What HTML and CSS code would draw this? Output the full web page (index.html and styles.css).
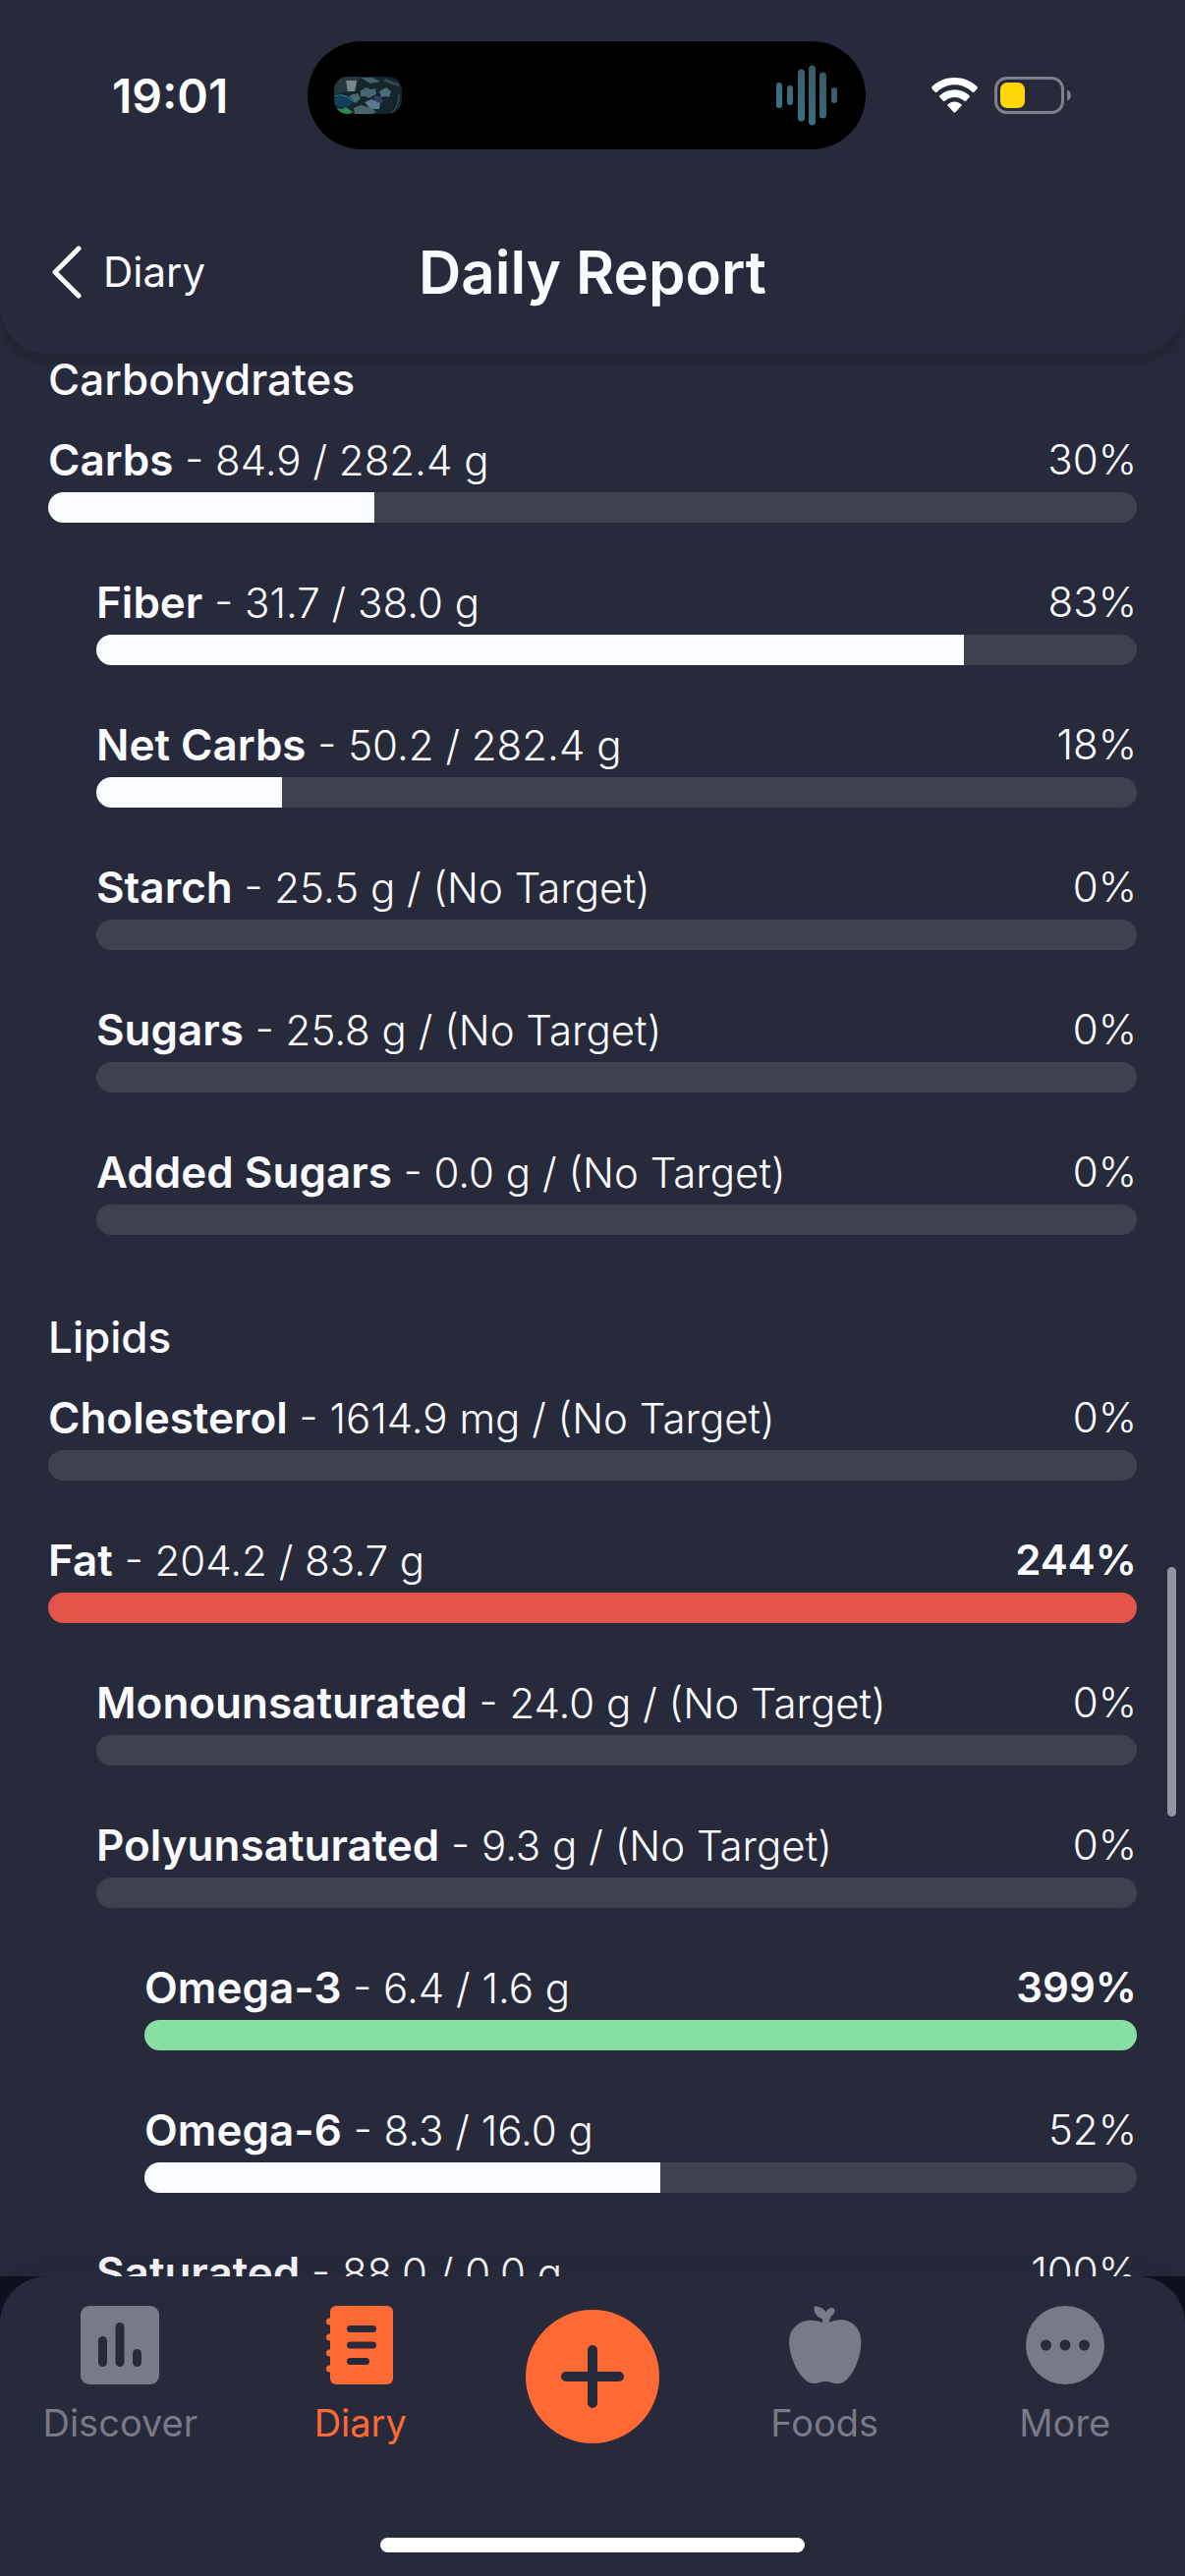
FILE: index.html
```html
<!DOCTYPE html>
<html lang="en">
<head>
  <meta charset="UTF-8" />
  <meta name="viewport" content="width=device-width, initial-scale=1.0" />
  <title>Daily Report</title>
  <link rel="stylesheet" href="styles.css">
</head>
<body>
  <header class="header">
    <!-- Status bar -->
    <div class="status">
      <time class="clock">19:01</time>
      <div class="island">
        <svg class="art" viewBox="0 0 69 38" aria-hidden="true">
          <rect width="69" height="38" fill="#14262b"/>
          <path d="M0 0h26l-4 14L0 18z" fill="#26383c"/>
          <path d="M12 4h11l-2 11h-7z" fill="#77868a"/>
          <path d="M27 1l12 0 8 4-10 2z" fill="#3f626b"/>
          <path d="M52 2l14 5v3L50 5z" fill="#34484d"/>
          <path d="M16 19l8-2 3 5-5 5-6-3z" fill="#4c6971"/>
          <path d="M27 14l6-3 4 2 5-1 1 6-8 4-3-2-5 0z" fill="#466673"/>
          <path d="M46 15l7-4 5 4-2 6-4-1-4 1z" fill="#4b6b78"/>
          <path d="M41 20l6 0 3 5-4 3-6-3z" fill="#30405a"/>
          <path d="M31 26l7-3 4 2 5 2-1 6-9 0z" fill="#587a8f"/>
          <path d="M20 32l7-3 11 3 5 4-4 2H21z" fill="#48656b"/>
          <ellipse cx="9" cy="25" rx="10" ry="6" fill="#133f5c"/>
          <path d="M0 20q9-4 18 4" fill="none" stroke="#2c8494" stroke-width="1"/>
          <path d="M2 32l6 1 4-2 7 5-4 2H5z" fill="#2f8656"/>
          <path d="M66 18q1 12-8 19" fill="none" stroke="#45666c" stroke-width="1"/>
        </svg>
        <svg class="wave" viewBox="0 0 62 62" aria-hidden="true">
          <defs>
            <linearGradient id="waveFill" x1="0" y1="1" x2="1" y2="0">
              <stop offset="0" stop-color="#377b91"/>
              <stop offset="1" stop-color="#3b5358"/>
            </linearGradient>
          </defs>
          <path fill="url(#waveFill)" d="M0 21a3 3 0 0 1 6 0v20a3 3 0 0 1-6 0zM11 24a3 3 0 0 1 6 0v14a3 3 0 0 1-6 0zM22 8a3.500 3.500 0 0 1 7 0v46a3.500 3.500 0 0 1-7 0zM33 4a3.500 3.500 0 0 1 7 0v54a3.500 3.500 0 0 1-7 0zM44 11a3.500 3.500 0 0 1 7 0v40a3.500 3.500 0 0 1-7 0zM56 26a3 3 0 0 1 6 0v10a3 3 0 0 1-6 0z"/>
        </svg>
      </div>
      <div class="signals">
        <svg class="wifi" viewBox="0 0 47 36" role="img" aria-label="Wi-Fi">
          <path fill="#fff" d="M23.500 0C32.500 0 40.500 3.400 46.300 9c.8.800.9 1.600.1 2.400l-2.900 3c-.7.700-1.600.7-2.300 0C36.500 10 30.300 7.300 23.500 7.300S10.500 10 5.800 14.400c-.7.700-1.600.7-2.300 0l-2.900-3C-.2 10.600-.1 9.800.7 9 6.500 3.400 14.500 0 23.500 0z"/>
          <path fill="#fff" d="M23.500 12.300c5.600 0 10.800 2.100 14.800 5.700.8.700.8 1.600.1 2.300l-3.100 3.100c-.7.700-1.500.7-2.300.1-2.600-2.300-5.900-3.600-9.500-3.600s-6.900 1.300-9.500 3.600c-.8.600-1.600.6-2.300-.1l-3.100-3.100c-.7-.7-.7-1.600.1-2.300 4-3.600 9.200-5.700 14.800-5.700z"/>
          <path fill="#fff" d="M23.500 24.500c2.500 0 4.800.9 6.600 2.400.8.600.8 1.500.1 2.200l-5.600 5.900c-.7.700-1.500.7-2.200 0l-5.600-5.900c-.7-.7-.7-1.600.1-2.200 1.800-1.500 4.100-2.400 6.600-2.400z"/>
        </svg>
        <svg class="battery" viewBox="0 0 78 38" role="img" aria-label="Battery">
          <rect x="1.500" y="1.500" width="68" height="35" rx="11" fill="none" stroke="#7d7f89" stroke-width="3"/>
          <path d="M74 13.500q4 1.500 4 5.500t-4 5.500z" fill="#7d7f89"/>
          <rect x="6" y="6" width="25" height="26" rx="7" fill="#ffd60a"/>
        </svg>
      </div>
    </div>

    <!-- Title bar -->
    <div class="title-bar">
      <a href="#diary" class="back">
        <svg class="chevron" viewBox="0 0 31 54" aria-hidden="true">
          <path d="M28 3L4 27l24 24" fill="none" stroke="currentColor" stroke-width="5" stroke-linecap="round" stroke-linejoin="round"/>
        </svg>
        Diary
      </a>
      <h1>Daily Report</h1>
    </div>
  </header>

  <main class="report">
    <section class="group">
      <h2>Carbohydrates</h2>
      <ul class="nutrients">
        <li class="nutrient">
          <p class="line"><span><b>Carbs</b> - 84.9 / 282.4 g</span><span>30%</span></p>
          <div class="track"><div class="fill" style="width: 30%"></div></div>
        </li>
        <li class="nutrient level-2">
          <p class="line"><span><b>Fiber</b> - 31.7 / 38.0 g</span><span>83%</span></p>
          <div class="track"><div class="fill" style="width: 83.4%"></div></div>
        </li>
        <li class="nutrient level-2">
          <p class="line"><span><b>Net Carbs</b> - 50.2 / 282.4 g</span><span>18%</span></p>
          <div class="track"><div class="fill" style="width: 17.8%"></div></div>
        </li>
        <li class="nutrient level-2">
          <p class="line"><span><b>Starch</b> - 25.5 g / (No Target)</span><span>0%</span></p>
          <div class="track"></div>
        </li>
        <li class="nutrient level-2">
          <p class="line"><span><b>Sugars</b> - 25.8 g / (No Target)</span><span>0%</span></p>
          <div class="track"></div>
        </li>
        <li class="nutrient level-2">
          <p class="line"><span><b>Added Sugars</b> - 0.0 g / (No Target)</span><span>0%</span></p>
          <div class="track"></div>
        </li>
      </ul>
    </section>

    <section class="group">
      <h2>Lipids</h2>
      <ul class="nutrients">
        <li class="nutrient">
          <p class="line"><span><b>Cholesterol</b> - 1614.9 mg / (No Target)</span><span>0%</span></p>
          <div class="track"></div>
        </li>
        <li class="nutrient">
          <p class="line"><span><b>Fat</b> - 204.2 / 83.7 g</span><strong>244%</strong></p>
          <div class="track"><div class="fill over" style="width: 100%"></div></div>
        </li>
        <li class="nutrient level-2">
          <p class="line"><span><b>Monounsaturated</b> - 24.0 g / (No Target)</span><span>0%</span></p>
          <div class="track"></div>
        </li>
        <li class="nutrient level-2">
          <p class="line"><span><b>Polyunsaturated</b> - 9.3 g / (No Target)</span><span>0%</span></p>
          <div class="track"></div>
        </li>
        <li class="nutrient level-3">
          <p class="line"><span><b>Omega-3</b> - 6.4 / 1.6 g</span><strong>399%</strong></p>
          <div class="track"><div class="fill met" style="width: 100%"></div></div>
        </li>
        <li class="nutrient level-3">
          <p class="line"><span><b>Omega-6</b> - 8.3 / 16.0 g</span><span>52%</span></p>
          <div class="track"><div class="fill" style="width: 52%"></div></div>
        </li>
        <li class="nutrient level-2">
          <p class="line"><span><b>Saturated</b> - 88.0 / 0.0 g</span><span>100%</span></p>
          <div class="track"><div class="fill" style="width: 100%"></div></div>
        </li>
      </ul>
    </section>
  </main>
  <div class="scroll-thumb"></div>

  <!-- Bottom tabs -->
  <footer class="footer">
    <div class="tab-sheet">
      <nav class="tabs">
        <a href="#discover" class="tab">
          <svg class="tab-icon" viewBox="0 0 80 80" aria-hidden="true">
            <rect width="80" height="80" rx="9" fill="currentColor"/>
            <g class="cut">
              <rect x="18" y="31" width="9" height="31" rx="4.500"/>
              <rect x="35.500" y="17" width="9" height="45" rx="4.500"/>
              <rect x="53" y="44" width="9" height="18" rx="4.500"/>
            </g>
          </svg>
          Discover
        </a>
        <a href="#diary" class="tab active">
          <svg class="tab-icon" viewBox="0 0 80 80" aria-hidden="true">
            <rect x="9" width="64" height="80" rx="6" fill="currentColor"/>
            <g fill="currentColor">
              <circle cx="8.500" cy="16" r="3.500"/>
              <circle cx="8.500" cy="32" r="3.500"/>
              <circle cx="8.500" cy="48" r="3.500"/>
              <circle cx="8.500" cy="64" r="3.500"/>
            </g>
            <g class="cut">
              <rect x="26" y="20" width="30" height="7" rx="3.500"/>
              <rect x="26" y="36.500" width="30" height="7" rx="3.500"/>
              <rect x="26" y="53" width="23" height="7" rx="3.500"/>
            </g>
          </svg>
          Diary
        </a>
        <button type="button" class="add" aria-label="Add">
          <svg class="plus" viewBox="0 0 64 64" aria-hidden="true">
            <path d="M32 5v54M5 32h54" fill="none" stroke="currentColor" stroke-width="10" stroke-linecap="round"/>
          </svg>
        </button>
        <a href="#foods" class="tab">
          <svg class="tab-icon" viewBox="0 0 80 80" aria-hidden="true">
            <path fill="currentColor" d="M38 17v-4C32 12 29 7 29.500 .5c6 0 10 2 12 6 2-4 5-5.500 8-4 2 2 1 4.500-1 6.500-2 2-3.500 4-3.500 8 10-5 21-3 27 4 5 6 6 14 5 22-1.500 12-7 25-14 32-5 5-11 5-16 3-4-1.500-8-1.500-12 0-6 2-11 1-16-4C12 67 6 54 4.500 42c-1-8 0-15 5-20 7-8 18-9 28.500-5z"/>
          </svg>
          Foods
        </a>
        <a href="#more" class="tab">
          <svg class="tab-icon" viewBox="0 0 80 80" aria-hidden="true">
            <circle cx="40" cy="40" r="40" fill="currentColor"/>
            <g class="cut">
              <circle cx="20.500" cy="40" r="5.500"/>
              <circle cx="40" cy="40" r="5.500"/>
              <circle cx="59.500" cy="40" r="5.500"/>
            </g>
          </svg>
          More
        </a>
      </nav>
      <div class="home-indicator"></div>
    </div>
  </footer>
</body>
</html>
```
FILE: styles.css
```css
* {
  margin: 0;
  padding: 0;
  box-sizing: border-box;
}

body {
  display: flex;
  flex-direction: column;
  position: relative;
  height: 100vh;
  overflow: hidden;
  background: #272a3b;
  color: #fafbff;
  font-family: Inter, "Liberation Sans", sans-serif;
  font-size: 42px;
}

a {
  color: inherit;
  text-decoration: none;
}

svg {
  display: block;
  flex: none;
}

.header {
  position: relative;
  z-index: 2;
  flex: none;
  background: #272a3b;
  border-radius: 0 0 48px 48px;
  box-shadow: 0 10px 6px rgba(0, 0, 0, 0.14);
}

/* Status bar */
.status {
  display: grid;
  grid-template-columns: 313fr 568fr 325fr;
  align-items: center;
  padding-top: 42px;
}

.clock {
  padding-left: 114px;
  font-size: 48px;
  font-weight: 600;
  color: #fff;
}

.island {
  display: flex;
  align-items: center;
  justify-content: space-between;
  height: 110px;
  padding: 0 29px 0 27px;
  border-radius: 55px;
  background: #000;
}

.art {
  width: 69px;
  height: 38px;
  border-radius: 14px;
}

.wave {
  width: 62px;
  height: 62px;
}

.signals {
  display: flex;
  align-items: center;
  gap: 17px;
  padding-left: 67px;
}

.wifi {
  width: 47px;
  height: 36px;
}

.battery {
  width: 78px;
  height: 38px;
}

/* Title bar */
.title-bar {
  display: grid;
  grid-template-columns: 1fr auto 1fr;
  align-items: center;
  padding: 89px 52px 47px;
  line-height: 72px;
}

.back {
  display: flex;
  align-items: center;
  gap: 22px;
}

.chevron {
  width: 31px;
  height: 54px;
}

h1 {
  font-size: 60px;
  font-weight: 600;
}

/* Report */
.report {
  flex: 1;
  min-height: 0;
  overflow: hidden;
  padding: 2px 49px 0;
}

.group {
  margin-bottom: 80px;
}

h2 {
  margin-bottom: 30px;
  font-size: 44px;
  font-weight: 500;
  line-height: 48px;
}

.nutrients {
  display: flex;
  flex-direction: column;
  gap: 53px;
  list-style: none;
}

.level-2 {
  padding-left: 49px;
}

.level-3 {
  padding-left: 98px;
}

.line {
  display: flex;
  justify-content: space-between;
  height: 56px;
  margin-bottom: 5px;
  font-weight: 300;
  line-height: 56px;
  white-space: nowrap;
}

.line b {
  font-size: 44px;
  font-weight: 600;
}

.line strong {
  font-weight: 600;
}

.track {
  height: 31px;
  overflow: hidden;
  border-radius: 16px;
  background: #40414f;
}

.fill {
  height: 100%;
  background: #fafbff;
}

.fill.over {
  background: #e5544b;
}

.fill.met {
  background: #87dfa4;
}

.scroll-thumb {
  position: absolute;
  top: 1595px;
  right: 9px;
  width: 9px;
  height: 254px;
  border-radius: 5px;
  background: #93959e;
}

/* Bottom tabs */
.footer {
  z-index: 1;
  flex: none;
  background: #0e1020;
  box-shadow: 0 0 60px rgba(0, 0, 0, 0.1);
}

.tab-sheet {
  padding: 30px 0 24px;
  border-radius: 48px 48px 0 0;
  background: #272a3b;
}

.tabs {
  display: grid;
  grid-template-columns: 1fr 1fr 228px 1fr 1fr;
  justify-items: center;
  color: #787a87;
}

.tab {
  display: flex;
  flex-direction: column;
  align-items: center;
  gap: 15px;
  font-size: 38px;
  line-height: 48px;
}

.tab.active {
  color: #ff6934;
}

.tab-icon {
  width: 80px;
  height: 80px;
}

.cut {
  fill: #272a3b;
}

.add {
  display: flex;
  align-items: center;
  justify-content: center;
  align-self: center;
  width: 136px;
  height: 136px;
  border: none;
  border-radius: 50%;
  background: #ff6934;
  color: #272a3b;
}

.plus {
  width: 64px;
  height: 64px;
}

.home-indicator {
  width: 432px;
  height: 15px;
  margin: 93px auto 0;
  border-radius: 8px;
  background: #fff;
}
```
